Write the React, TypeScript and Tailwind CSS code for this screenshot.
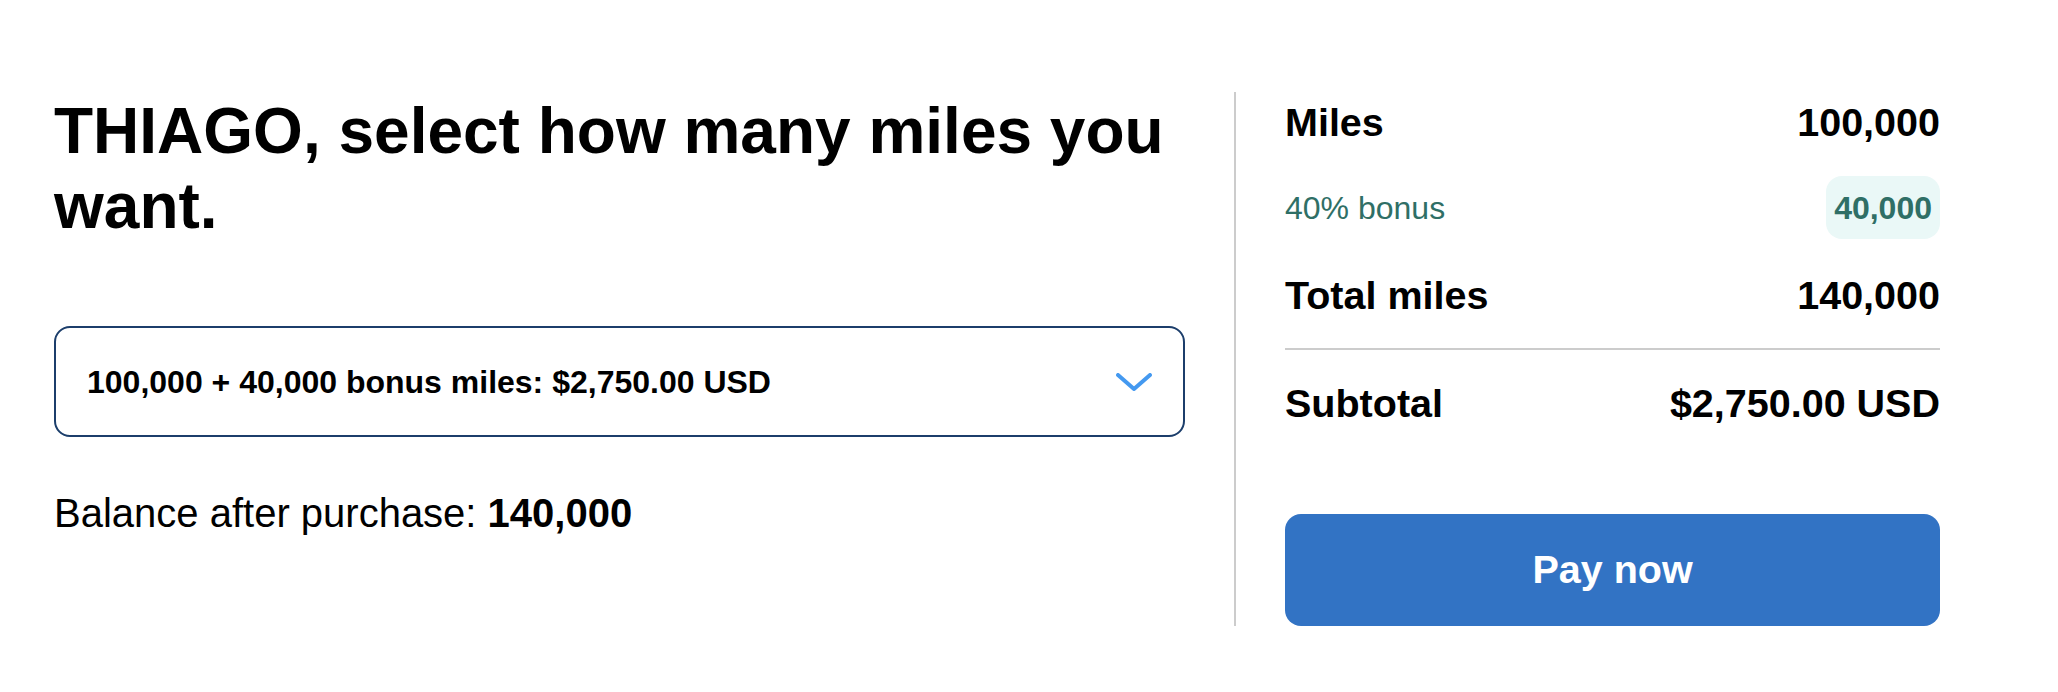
const font = { fontFamily: '"Liberation Sans", Arial, Helvetica, sans-serif' };

const Row = ({ label, value }: { label: string; value: string }) => (
  <div className="flex justify-between items-center text-[39.5px] leading-[44px] font-bold text-black">
    <span>{label}</span>
    <span>{value}</span>
  </div>
);

const App = () => {
  return (
    <div style={font} className="w-[2058px] h-[692px] bg-white text-black">
      <div className="flex pl-[54px] pt-[92px]">
        {/* left: picker */}
        <div className="w-[1131px]">
          <h1 className="mt-[2px] text-[64px] leading-[75px] font-bold">
            THIAGO, select how many miles you want.
          </h1>
          <button
            type="button"
            className="mt-[82px] w-full h-[111px] flex items-center justify-between pl-[31px] pr-[31px] border-2 border-[#1c3e6b] rounded-[16px] bg-white text-left">
            <span className="text-[32px] font-bold">
              100,000 + 40,000 bonus miles: $2,750.00 USD
            </span>
            <svg width="36" height="18" viewBox="0 0 36 18" fill="none">
              <path
                d="M2 2 L18 16 L34 2"
                stroke="#4499f0"
                strokeWidth="4"
                strokeLinecap="round"
                strokeLinejoin="round"
              />
            </svg>
          </button>
          <p className="mt-[54px] text-[40px] leading-[45px]">
            Balance after purchase: <span className="font-bold">140,000</span>
          </p>
        </div>

        {/* right: summary */}
        <div className="ml-[49px] pl-[49px] w-[706px] border-l-2 border-[#cccccc]">
          <div className="pt-[8px]">
            <Row label="Miles" value="100,000" />
            <div className="mt-[32px] h-[63px] flex justify-between items-center">
              <span className="text-[32px] text-[#2f6f66]">40% bonus</span>
              <span className="h-[63px] flex items-center px-[8px] rounded-[16px] bg-[#eaf8f7] text-[32px] font-bold text-[#2f6f66]">
                40,000
              </span>
            </div>
            <div className="mt-[34px]">
              <Row label="Total miles" value="140,000" />
            </div>
            <div className="mt-[31px] h-[2px] bg-[#cccccc]" />
            <div className="mt-[31px]">
              <Row label="Subtotal" value="$2,750.00 USD" />
            </div>
            <button
              type="button"
              className="mt-[89px] w-full h-[112px] rounded-[16px] bg-[#3273c4] text-white text-[39.5px] font-bold">
              Pay now
            </button>
          </div>
        </div>
      </div>
    </div>
  );
};

export default App;
